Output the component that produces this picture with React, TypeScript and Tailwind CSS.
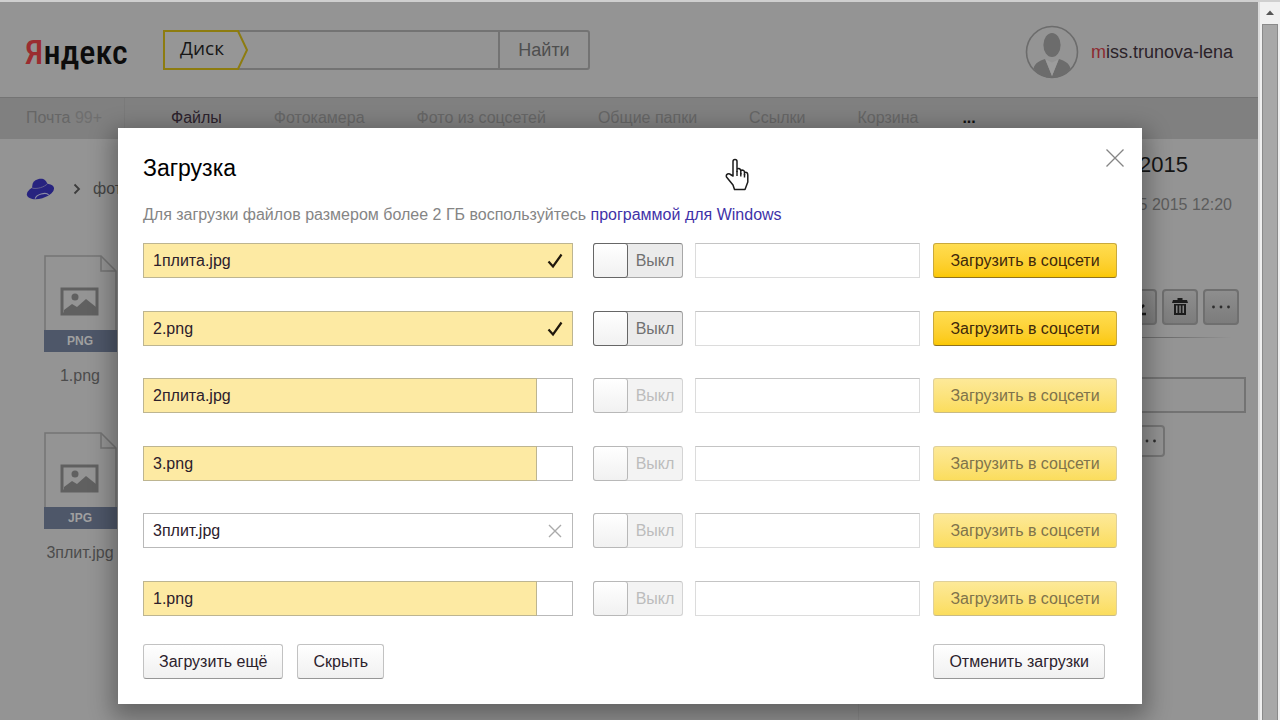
import React from "react";

type Upload = { name: string; progress: number };

const uploads: Upload[] = [
  { name: "1плита.jpg", progress: 100 },
  { name: "2.png", progress: 100 },
  { name: "2плита.jpg", progress: 92 },
  { name: "3.png", progress: 92 },
  { name: "3плит.jpg", progress: 0 },
  { name: "1.png", progress: 92 },
];

const sections = ["Фотокамера", "Фото из соцсетей", "Общие папки", "Ссылки", "Корзина"];

function Header() {
  return (
    <header className="flex h-[95px] items-center pl-[25px] pr-[25px]">
      <a
        href="#"
        className="w-[138px] whitespace-nowrap pt-1 font-['Roboto_Condensed','Liberation_Sans',sans-serif] text-[34px] font-medium leading-[48px] text-[#0c0c0c]"
      >
        <span className="text-[#9b2c30]">Я</span>ндекс
      </a>
      <form className="flex h-10 w-[427px] rounded-[3px] border-2 border-[#737373]">
        <span className="relative -my-0.5 -ml-0.5 block h-10 w-[86px]">
          <svg className="absolute inset-0" width="86" height="40" viewBox="0 0 86 40" fill="none">
            <path d="M1 1H75L84 20L75 39H1Z" fill="#969696" stroke="#8d7c10" strokeWidth="2" />
          </svg>
          <label
            htmlFor="search"
            className="relative block pl-[17px] font-['Open_Sans','Noto_Sans',sans-serif] text-[19px] leading-[37px] text-[#161616]"
          >
            Диск
          </label>
        </span>
        <input id="search" className="min-w-0 flex-1 bg-transparent outline-none" />
        <button type="button" className="w-[90px] border-l-2 border-[#737373] text-lg leading-none text-[#4e4e4e]">
          Найти
        </button>
      </form>
      <a href="#" className="ml-auto flex items-center gap-3 pt-1">
        <svg width="54" height="54" viewBox="0 0 54 54" fill="none">
          <circle cx="27" cy="27" r="25.5" stroke="#6c6c6c" strokeWidth="1.6" />
          <ellipse cx="27" cy="20" rx="8.6" ry="12" fill="#6c6c6c" />
          <path d="M20 34L27 51L34 34C40 36 44 38 45.500 43.500C41 49.500 34.500 53 27 53C19.500 53 13 49.500 8.500 43.500C10 38 14 36 20 34Z" fill="#6c6c6c" />
          <path d="M20.500 34.500L27 51L33.500 34.500L27 37.500Z" fill="#9c9c9c" />
        </svg>
        <span className="text-lg leading-6 text-[#2b2229]">
          <span className="text-[#8c2a30]">m</span>iss.trunova-lena
        </span>
      </a>
    </header>
  );
}

function Nav() {
  return (
    <nav className="flex h-[42px] border-t border-[#747474] bg-[#808080] text-base leading-10 text-[#666]">
      <a href="#" className="w-[125px] border-r border-[#7a7a7a] pl-[26px]">
        Почта <span className="text-[#6f6f6f]">99+</span>
      </a>
      <div className="flex gap-[52px] pl-[46px]">
        <a href="#" className="text-[#2c222c]">Файлы</a>
        {sections.map((s) => (
          <a href="#" key={s}>{s}</a>
        ))}
      </div>
      <a href="#" className="pl-11 font-bold text-[#111]">...</a>
    </nav>
  );
}

function FileTile({ type, name }: { type: string; name: string }) {
  return (
    <figure className="flex h-[177px] w-40 flex-col items-center gap-3">
      <div className="flex flex-col">
        <svg className="block" width="73" height="75" viewBox="0 0 73 75" fill="none">
          <path d="M1 75V1H57L72 16V75" stroke="#747474" strokeWidth="1.5" />
          <path d="M57 1V16H72" stroke="#747474" strokeWidth="1.5" />
          <rect x="18" y="34" width="35" height="25" stroke="#606060" strokeWidth="3" />
          <circle cx="31" cy="42" r="3.500" fill="#606060" />
          <path d="M20 55L28 49L33 52L42 44L52 52V58H20Z" fill="#606060" />
        </svg>
        <span className="block w-[73px] bg-[#4e5769] text-center text-xs font-bold leading-[22px] text-[#a0a0a0]">{type}</span>
      </div>
      <figcaption className="text-base text-[#4c4c4c]">{name}</figcaption>
    </figure>
  );
}

const toolButton =
  "flex h-9 w-9 shrink-0 items-center justify-center rounded-[4px] border-2 border-[#6f6f6f] bg-linear-to-b from-[#8e8e8e] to-[#7c7c7c]";

function Dots() {
  return (
    <svg width="20" height="4" viewBox="0 0 20 4" fill="#2e2e2e">
      <circle cx="2.500" cy="2" r="1.400" />
      <circle cx="10" cy="2" r="1.400" />
      <circle cx="17.500" cy="2" r="1.400" />
    </svg>
  );
}

function Details() {
  return (
    <aside className="flex w-[400px] flex-col items-end border-l border-[#8c8c8c]">
      <h2 className="pr-[70px] pt-2.5 text-[22px] leading-8 text-[#151515]">2015</h2>
      <p className="pr-[26px] pt-3 text-base leading-6 text-[#5c5c5c]">5 2015 12:20</p>
      <div className="flex gap-[5px] pr-[19px] pt-[72px]">
        <button type="button" aria-label="Скачать" className={toolButton}>
          <svg width="20" height="20" viewBox="0 0 20 20" fill="none" stroke="#1c1c1c" strokeWidth="2.500">
            <path d="M10 2V11M5 8L10 13L15 8M3 17H17" />
          </svg>
        </button>
        <button type="button" aria-label="Удалить" className={toolButton}>
          <svg width="18" height="20" viewBox="0 0 18 20" fill="#1c1c1c">
            <path d="M6.500 1H11.500V3H16L17 6H1L2 3H6.500Z" />
            <path fillRule="evenodd" d="M3 7H15V18H3ZM5 8.500V16H6.500V8.500ZM8.300 8.500V16H9.800V8.500ZM11.500 8.500V16H13V8.500Z" />
          </svg>
        </button>
        <button type="button" aria-label="Ещё" className={toolButton}>
          <Dots />
        </button>
      </div>
      <div className="mr-[26px] mt-3 h-px w-80 bg-linear-to-r from-[#6d6d6d] from-80% to-[#949494]" />
      <input aria-label="Ссылка" className="mr-3 mt-[39px] h-9 w-80 border-2 border-[#737373] bg-transparent" />
      <button
        type="button"
        aria-label="Поделиться"
        className="mr-[93px] mt-3 flex h-8 w-9 items-center justify-center rounded-[4px] border-2 border-[#757575]"
      >
        <Dots />
      </button>
    </aside>
  );
}

function Scrollbar() {
  return (
    <div className="flex w-[22px] shrink-0 flex-col items-center border-l-2 border-[#dcdcdc] bg-[#f0f0f0]">
      <svg className="my-[7px]" width="10" height="8" viewBox="0 0 10 8">
        <path d="M1 6L5 1.500L9 6Z" fill="#555" />
      </svg>
      <div className="w-4 flex-1 border-x border-t border-[#8a8a8a] bg-[#a8a8a8]" />
    </div>
  );
}

function UploadRow({ file }: { file: Upload }) {
  const done = file.progress === 100;
  return (
    <li className="flex h-[35px] items-stretch not-last:odd:mb-[33px] not-last:even:mb-8">
      <div className="relative mr-5 flex flex-1 items-center border border-[#b9b9b9] bg-white px-[9px]">
        {file.progress > 0 && (
          <div
            className={"absolute -inset-y-px -left-px border border-[#bdb591] bg-[#fdeaa3] " + (done ? "-right-px" : "")}
            style={done ? undefined : { width: file.progress + "%" }}
          />
        )}
        <span className="relative flex-1 text-[#2c202c]">{file.name}</span>
        {done && (
          <svg className="relative" width="16" height="18" viewBox="0 0 16 18" fill="none">
            <path d="M1.500 9.500L6 14.500L14.500 2.500" stroke="#20180c" strokeWidth="2.200" />
          </svg>
        )}
        {file.progress === 0 && (
          <button type="button" aria-label="Отменить" className="relative">
            <svg width="16" height="16" viewBox="0 0 16 16" fill="none">
              <path d="M2 2L14 14M14 2L2 14" stroke="#aaa" strokeWidth="1.400" />
            </svg>
          </button>
        )}
      </div>
      <label
        className={
          "relative mr-3 flex w-[90px] rounded-[3px] border " +
          (done
            ? "border-[#a8a8a8] border-t-[#808080] bg-[#ebebeb] text-[#707070]"
            : "border-[#d4d4d4] border-t-[#c0c0c0] bg-[#f3f3f3] text-[#bcbcbc]")
        }
      >
        <input type="checkbox" role="switch" disabled={!done} className="sr-only" />
        <span
          className={
            "-my-px -ml-px w-[35px] rounded-[3px] border bg-linear-to-b from-white to-[#f1f1f1] " +
            (done ? "border-[#666]" : "border-[#b8b8b8]")
          }
        />
        <span className="flex-1 text-center leading-[34px]">Выкл</span>
      </label>
      <input
        aria-label={"Описание " + file.name}
        disabled={!done}
        className="mr-[13px] w-[225px] border border-[#dcdcdc] border-t-[#c4c4c4] bg-white px-2"
      />
      <button
        type="button"
        disabled={!done}
        className={
          "w-[184px] rounded-[3px] border " +
          (done
            ? "border-[#c9a93c] border-b-[#8f7220] bg-linear-to-b from-[#ffdd50] to-[#fbc800] text-[#40280a]"
            : "border-[#dfd09a] border-b-[#c9bb85] bg-linear-to-b from-[#fde998] to-[#fbdd5c] text-[#7f734b]")
        }
      >
        Загрузить в соцсети
      </button>
    </li>
  );
}

const plainButton =
  "h-[35px] rounded-[3px] border border-[#c2c2c2] border-b-[#969696] bg-linear-to-b from-white to-[#f0f0f0] px-[15px] text-[#2c222c]";

function UploadDialog() {
  return (
    <section
      role="dialog"
      aria-labelledby="upload-title"
      className="relative bg-white px-[25px] pb-[25px] pt-6 text-base shadow-[0_8px_22px_6px_rgba(0,0,0,0.32)]"
    >
      <div className="flex items-start justify-between">
        <h1 id="upload-title" className="text-[23px] leading-8 text-black">Загрузка</h1>
        <button type="button" aria-label="Закрыть" className="-mr-2">
          <svg width="20" height="20" viewBox="0 -1 20 20" fill="none" className="-mt-1 block">
            <path d="M1.500 0.500L18.500 17.500M18.500 0.500L1.500 17.500" stroke="#858585" strokeWidth="1.300" />
          </svg>
        </button>
      </div>
      <p className="mt-[19px] leading-6 text-[#858585]">
        Для загрузки файлов размером более 2 ГБ воспользуйтесь{" "}
        <a href="#" className="text-[#3f32a8]">программой для Windows</a>
      </p>
      <ul className="mt-4">
        {uploads.map((f) => (
          <UploadRow key={f.name} file={f} />
        ))}
      </ul>
      <div className="mt-7 flex gap-3.5 pr-3">
        <button type="button" className={plainButton}>Загрузить ещё</button>
        <button type="button" className={plainButton}>Скрыть</button>
        <button type="button" className={plainButton + " ml-auto"}>Отменить загрузки</button>
      </div>
      <svg className="absolute left-[607px] top-[30px]" width="24" height="33" viewBox="0 0 24 33">
        <path
          d="M8 18V3.500C8 0.800 12 0.800 12 3.500V13.500V11C14 9.700 15.800 11 15.800 13V16V12.500C17.800 11.500 19.500 12.700 19.500 14.500V17V14.500C21.500 13.500 22.800 15 22.800 17V24L20 31.500H9.500L8 27L1.500 19C0.500 16 4 14.800 5.500 16.500Z"
          fill="#fff"
          stroke="#1c1c1c"
          strokeWidth="1.500"
          strokeLinejoin="round"
        />
        <path d="M12 13V18M15.800 15V18.500M19.500 16V19.500" stroke="#1c1c1c" strokeWidth="1.400" />
      </svg>
    </section>
  );
}

export default function App() {
  return (
    <div className="relative flex min-h-screen overflow-hidden border-t-2 border-[#cfcfcf] bg-[#949494] font-['Liberation_Sans',Arial,sans-serif]">
      <div className="flex min-w-0 flex-1 flex-col">
        <Header />
        <Nav />
        <div className="flex flex-1">
          <main className="min-w-0 flex-1">
            <div className="flex items-center pl-[25px] pt-[38px] text-base leading-6 text-[#444]">
              <svg width="30" height="22" viewBox="0 0 30 22" fill="none">
                <g transform="rotate(-16 15 12)">
                  <ellipse cx="15" cy="13.500" rx="14" ry="7" fill="#27237f" />
                  <path d="M8 9.500C8.500 3.500 11 1.200 16 1.200C21 1.200 23.500 3.500 24 9.500Z" fill="#27237f" />
                  <path d="M8 8C12 10.500 20 10.500 24 8" stroke="#6a6892" strokeWidth="0.800" />
                  <path d="M8 19C10 15.200 20 15.200 22 19" stroke="#8c8ca4" strokeWidth="1.100" />
                </g>
              </svg>
              <svg className="ml-[18px] mr-3" width="8" height="12" viewBox="0 0 8 12" fill="none">
                <path d="M1.500 1.500L6 6L1.500 10.500" stroke="#3c3c3c" strokeWidth="1.800" />
              </svg>
              <a href="#">фото</a>
            </div>
            <div className="pt-[54px]">
              <FileTile type="PNG" name="1.png" />
              <FileTile type="JPG" name="3плит.jpg" />
            </div>
          </main>
          <Details />
        </div>
      </div>
      <Scrollbar />
      <div className="absolute inset-0 pl-[118px] pr-[138px] pt-[126px]">
        <UploadDialog />
      </div>
    </div>
  );
}
